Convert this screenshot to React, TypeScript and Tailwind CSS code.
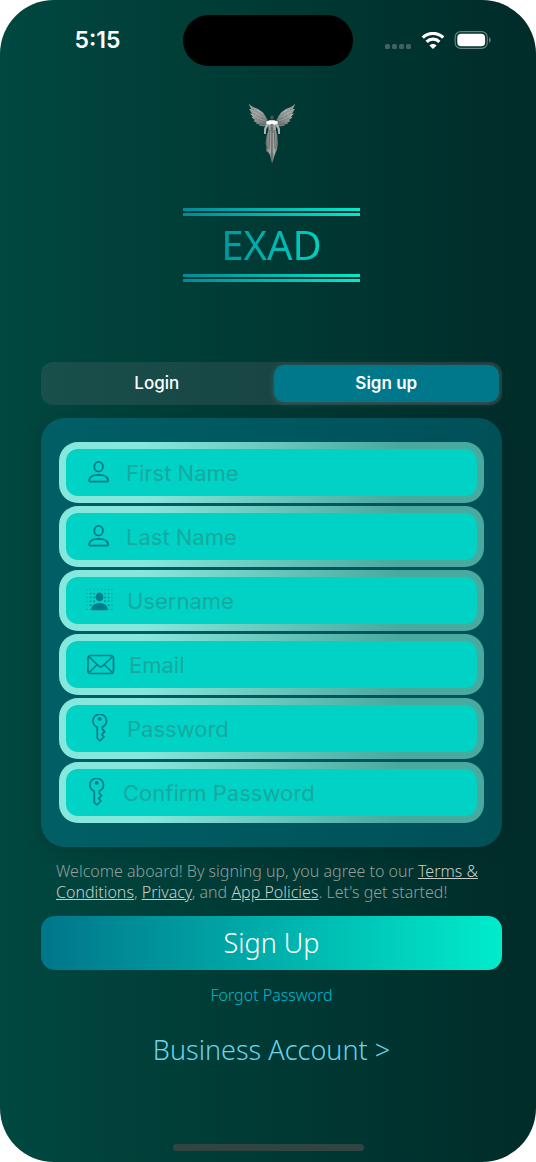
import { useState } from "react";
import type { ReactNode } from "react";

function Logo() {
  return (
    <svg viewBox="0 0 48 62" className="h-[62px] w-12" role="img" aria-label="Winged figure">
      <defs>
        <linearGradient id="wing" x1="0" y1="0" x2="0.6" y2="1">
          <stop offset="0" stopColor="#8a8f8d" />
          <stop offset="0.5" stopColor="#a3a5a4" />
          <stop offset="1" stopColor="#707674" />
        </linearGradient>
        <linearGradient id="robe" x1="0" y1="0" x2="1" y2="0">
          <stop offset="0" stopColor="#59635f" />
          <stop offset="0.35" stopColor="#a2a5a4" />
          <stop offset="0.5" stopColor="#6a716f" />
          <stop offset="0.7" stopColor="#a8abaa" />
          <stop offset="1" stopColor="#59635f" />
        </linearGradient>
        <g id="half">
          <path
            fill="url(#wing)"
            d="M0.500 0.800 L5 4 L10 6 L15 9.500 L18 14 L20.500 19 L19 22.500 L15 23.500 L11 22.500 L12 21.500 L8 21 L9 20 L5.500 18 L7 17 L3.500 14.500 L5 14 L2 10.500 L4 10.500 L1 6 L3 6Z"
          />
          <path d="M3 5 L15 13 M5 10 L16 16 M7 15 L17 19 M11 20 L18 21.500" stroke="#59625f" strokeWidth="0.500" opacity="0.7" />
          <path d="M4 4 L13 9 M6 9 L15 14 M9 15 L17 18" stroke="#c0c2c1" strokeWidth="0.500" opacity="0.6" />
          <path d="M19.500 19.500 L17.500 22 L16 26 L16 31 L17.800 31 L18.300 26 L20.500 22.500Z" fill="#aeb1b0" />
        </g>
      </defs>
      <use href="#half" />
      <use href="#half" transform="matrix(-1 0 0 1 48 0)" />
      <path fill="url(#robe)" d="M20 21 L28 21 L28 27 L29.500 33 L30 41 L29 47 L27.500 50 L26 54 L24 60.500 L22.500 54 L21 50 L18 48 L18.500 44 L17.500 40 L18.500 33 L20.500 27Z" />
      <path d="M21.800 27 L21 46 M24 24 L24 55 M26.200 27 L27 46" stroke="#4d5653" strokeWidth="0.700" />
      <path d="M23 28 L22.700 50 M25 30 L25.300 50" stroke="#c4c6c5" strokeWidth="0.400" />
      <path fill="#fff" d="M18 19 L21.500 17.300 L26.500 17.300 L30 19 L29.500 20.500 L27 21.800 L24 20.800 L21 21.800 L18.500 20.500Z" />
      <ellipse cx="24" cy="14.500" rx="1.600" ry="2.200" fill="#4b5250" />
    </svg>
  );
}

function PersonIcon() {
  return (
    <svg viewBox="0 0 26 26" className="h-[26px] w-[26px]" fill="none" stroke="currentColor" strokeWidth="1.800" aria-hidden="true">
      <ellipse cx="12.600" cy="6.700" rx="4.300" ry="4.900" />
      <path d="M4.600 21.700 C3.300 21.700 2.900 20.900 3.100 19.800 C3.700 17 7.300 14.800 12.600 14.800 C17.900 14.800 21.500 17 22.100 19.800 C22.300 20.900 21.900 21.700 20.600 21.700Z" strokeLinejoin="round" />
    </svg>
  );
}

const DOT_COLUMNS = [1, 4.6, 8.2, 11.8, 15.4, 19, 22.6, 26];
const DOT_ROWS = [1.6, 5.6, 9.4, 13.2, 17.2, 21.4];

function DottedPersonIcon() {
  return (
    <svg viewBox="0 1 27 24" className="h-6 w-[27px]" fill="currentColor" aria-hidden="true">
      {DOT_ROWS.map((y, row) =>
        DOT_COLUMNS.map((x, col) => {
          const covered = (row >= 1 && col >= 3 && col <= 4) || (row >= 4 && col >= 2 && col <= 5);
          return covered ? null : (
            <circle key={`${row}-${col}`} cx={x} cy={y} r={row === 0 || row === 5 || col === 0 || col === 7 ? 0.6 : 0.9} opacity="0.8" />
          );
        }),
      )}
      <ellipse cx="13.500" cy="9" rx="3.900" ry="4.400" />
      <path d="M7 22.200 C5.500 22.200 5.200 21.400 5.400 20.400 C5.900 17.300 9 14.900 13.500 14.900 C18 14.900 21.100 17.300 21.600 20.400 C21.800 21.400 21.500 22.200 20 22.200Z" />
    </svg>
  );
}

function MailIcon() {
  return (
    <svg viewBox="0 0 29 22" className="h-[22px] w-[29px]" fill="none" stroke="currentColor" strokeWidth="1.700" strokeLinejoin="round" aria-hidden="true">
      <rect x="1.900" y="1.500" width="25.600" height="18" rx="2.800" />
      <path d="M2.800 2.500 L12.600 11.900 Q14.700 13.800 16.800 11.900 L26.600 2.500 M2.800 18.700 L11 10.700 M26.600 18.700 L18.400 10.700" strokeWidth="1.500" />
    </svg>
  );
}

function KeyGlyph() {
  return (
    <>
      <path
        d="M7.700 1.200 C3.900 1.200 0.900 4.100 0.900 7.800 C0.900 10.700 2.700 13.100 5.300 14.200 L5.300 25.300 L7.500 27.500 Q8 27.900 8.500 27.400 L12 24 L9.700 21.600 L12.600 18.700 L10.300 16.200 L10.300 14.100 C12.900 13 14.500 10.600 14.500 7.800 C14.500 4.100 11.500 1.200 7.700 1.200Z"
        fill="none"
        stroke="currentColor"
        strokeWidth="1.700"
        strokeLinejoin="round"
      />
      <circle cx="7.700" cy="5.900" r="1.900" fill="currentColor" />
    </>
  );
}

function KeyIcon() {
  return (
    <svg viewBox="-6 1 27 29" className="h-[29px] w-[27px]" aria-hidden="true">
      <KeyGlyph />
    </svg>
  );
}

function ConfirmKeyIcon() {
  return (
    <svg viewBox="-3 1 23 29" className="h-[29px] w-[23px]" aria-hidden="true">
      <KeyGlyph />
    </svg>
  );
}

type Field = { id: string; label: string; type: string; icon: ReactNode };

const FIELDS: Field[] = [
  { id: "first-name", label: "First Name", type: "text", icon: <PersonIcon /> },
  { id: "last-name", label: "Last Name", type: "text", icon: <PersonIcon /> },
  { id: "username", label: "Username", type: "text", icon: <DottedPersonIcon /> },
  { id: "email", label: "Email", type: "email", icon: <MailIcon /> },
  { id: "password", label: "Password", type: "password", icon: <KeyIcon /> },
  { id: "confirm-password", label: "Confirm Password", type: "password", icon: <ConfirmKeyIcon /> },
];

function FormField({ id, label, type, icon }: Field) {
  return (
    <div className="rounded-[19px] bg-linear-to-r from-[#86e8dc] from-20% to-[#48a99f] to-80% p-[7px]">
      <div className="flex h-[47px] items-center gap-[14px] rounded-xl bg-[#00d3c6] pr-3 pl-5 text-[#007a8d]">
        <label htmlFor={id} aria-label={label} className="shrink-0">
          {icon}
        </label>
        <input
          id={id}
          type={type}
          placeholder={label}
          className="h-full min-w-0 flex-1 bg-transparent font-['Inter',sans-serif] text-[22px] text-[#00565c] outline-none placeholder:text-[#16a99f]"
        />
      </div>
    </div>
  );
}

function StatusBar() {
  return (
    <div className="grid grid-cols-[1fr_auto_1fr] items-center pt-[15px] text-white">
      <span className="pl-3 text-center font-['Inter',sans-serif] text-[23px] font-semibold">5:15</span>
      <div className="h-[51px] w-[170px] rounded-full bg-black" />
      <div className="flex items-center justify-end gap-[9px] pr-11">
        <svg viewBox="0 0 28 18" className="h-[18px] w-7 text-[#41625f]" fill="currentColor" aria-hidden="true">
          <rect x="1" y="12" width="5" height="5" rx="1.500" />
          <rect x="8" y="12" width="5" height="5" rx="1.500" />
          <rect x="15" y="12" width="5" height="5" rx="1.500" />
          <rect x="22" y="12" width="5" height="5" rx="1.500" />
        </svg>
        <svg viewBox="0 0 24 18" className="h-[18px] w-6" fill="none" stroke="#fff" strokeWidth="3.200" aria-hidden="true">
          <path d="M1.800 5.600 C7.500 0.100 16.500 0.100 22.200 5.600" />
          <path d="M5.600 9.800 C9.200 6.300 14.800 6.300 18.400 9.800" />
          <path d="M12 17 L8.400 13.400 C10.400 11.400 13.600 11.400 15.600 13.400Z" fill="#fff" stroke="none" />
        </svg>
        <svg viewBox="0 1 38 20" className="h-5 w-[38px]" aria-hidden="true">
          <rect x="1.200" y="1.600" width="32" height="16.800" rx="5.500" fill="none" stroke="#68827f" strokeWidth="1.200" />
          <rect x="3.300" y="3.700" width="27.800" height="12.600" rx="3.800" fill="#fff" />
          <path d="M35 7.200 C37.200 8 37.200 12 35 12.800Z" fill="#68827f" />
        </svg>
      </div>
    </div>
  );
}

function DoubleRule() {
  return (
    <div className="flex flex-col gap-[2px]">
      <div className="h-[3px] bg-linear-to-r from-[#008a99] to-[#00ebcb]" />
      <div className="h-[3px] bg-linear-to-r from-[#008a99] to-[#00ebcb]" />
    </div>
  );
}

export default function App() {
  const [tab, setTab] = useState("Sign up");

  return (
    <div className="min-h-screen bg-white">
      <div className="flex min-h-screen flex-col rounded-[54px] bg-linear-to-r from-[#004840] to-[#002c29] font-['Noto_Sans',sans-serif]">
        <StatusBar />

        <main className="flex flex-1 flex-col pr-[34px] pl-[41px]">
          <header className="flex flex-col items-center pt-[37px]">
            <Logo />
            <div className="mt-[43px] w-[177px]">
              <DoubleRule />
              <h1 className="bg-linear-to-r from-[#007f93] to-[#00eccb] bg-clip-text pt-[2px] pb-[2px] text-center text-[40px] leading-[54px] font-normal text-transparent">
                EXAD
              </h1>
              <DoubleRule />
            </div>
          </header>

          <div className="mt-20 grid grid-cols-2 gap-1 rounded-xl bg-[#767680]/20 p-[3px] font-['Inter',sans-serif] text-[17px] leading-[23px] text-white">
            {["Login", "Sign up"].map((name) => (
              <button
                key={name}
                type="button"
                aria-pressed={tab === name}
                onClick={() => setTab(name)}
                className={
                  tab === name
                    ? "rounded-[10px] bg-[#00788c] py-[7px] font-semibold shadow-[0_1px_6px_rgba(160,160,160,0.3)]"
                    : "rounded-[10px] py-[7px] font-medium"
                }
              >
                {name}
              </button>
            ))}
          </div>

          <form className="mt-[13px]" onSubmit={(event) => event.preventDefault()}>
            <div className="flex flex-col gap-[3px] rounded-3xl bg-linear-to-r from-[#005f65] to-[#005058] px-[18px] py-6 shadow-[0_4px_20px_rgba(0,0,0,0.12)]">
              {FIELDS.map((field) => (
                <FormField key={field.id} {...field} />
              ))}
            </div>

            <p className="mt-[14px] px-[15px] text-[16px] leading-[21px] font-light text-[#929f9c] [&_a]:text-[#c6cecb] [&_a]:underline">
              Welcome aboard! By signing up, you agree to our <a href="#terms">Terms &amp; Conditions</a>,{" "}
              <a href="#privacy">Privacy</a>, and <a href="#policies">App Policies</a>. Let's get started!
            </p>

            <button
              type="submit"
              className="mt-[13px] h-[54px] w-full rounded-[14px] bg-linear-to-r from-[#00768b] to-[#00eccb] text-[27px] font-light text-white"
            >
              Sign Up
            </button>
          </form>

          <nav className="flex flex-col items-center">
            <a href="#forgot" className="mt-[14px] text-[16px] leading-[22px] font-light text-[#00b8cc]">
              Forgot Password
            </a>
            <a href="#business" className="mt-6 text-[27px] leading-10 font-light text-[#68d2ea]">
              Business Account &gt;
            </a>
          </nav>
        </main>

        <div className="mb-[11px] h-[7px] w-[191px] self-center rounded-full bg-[#304543]" />
      </div>
    </div>
  );
}
